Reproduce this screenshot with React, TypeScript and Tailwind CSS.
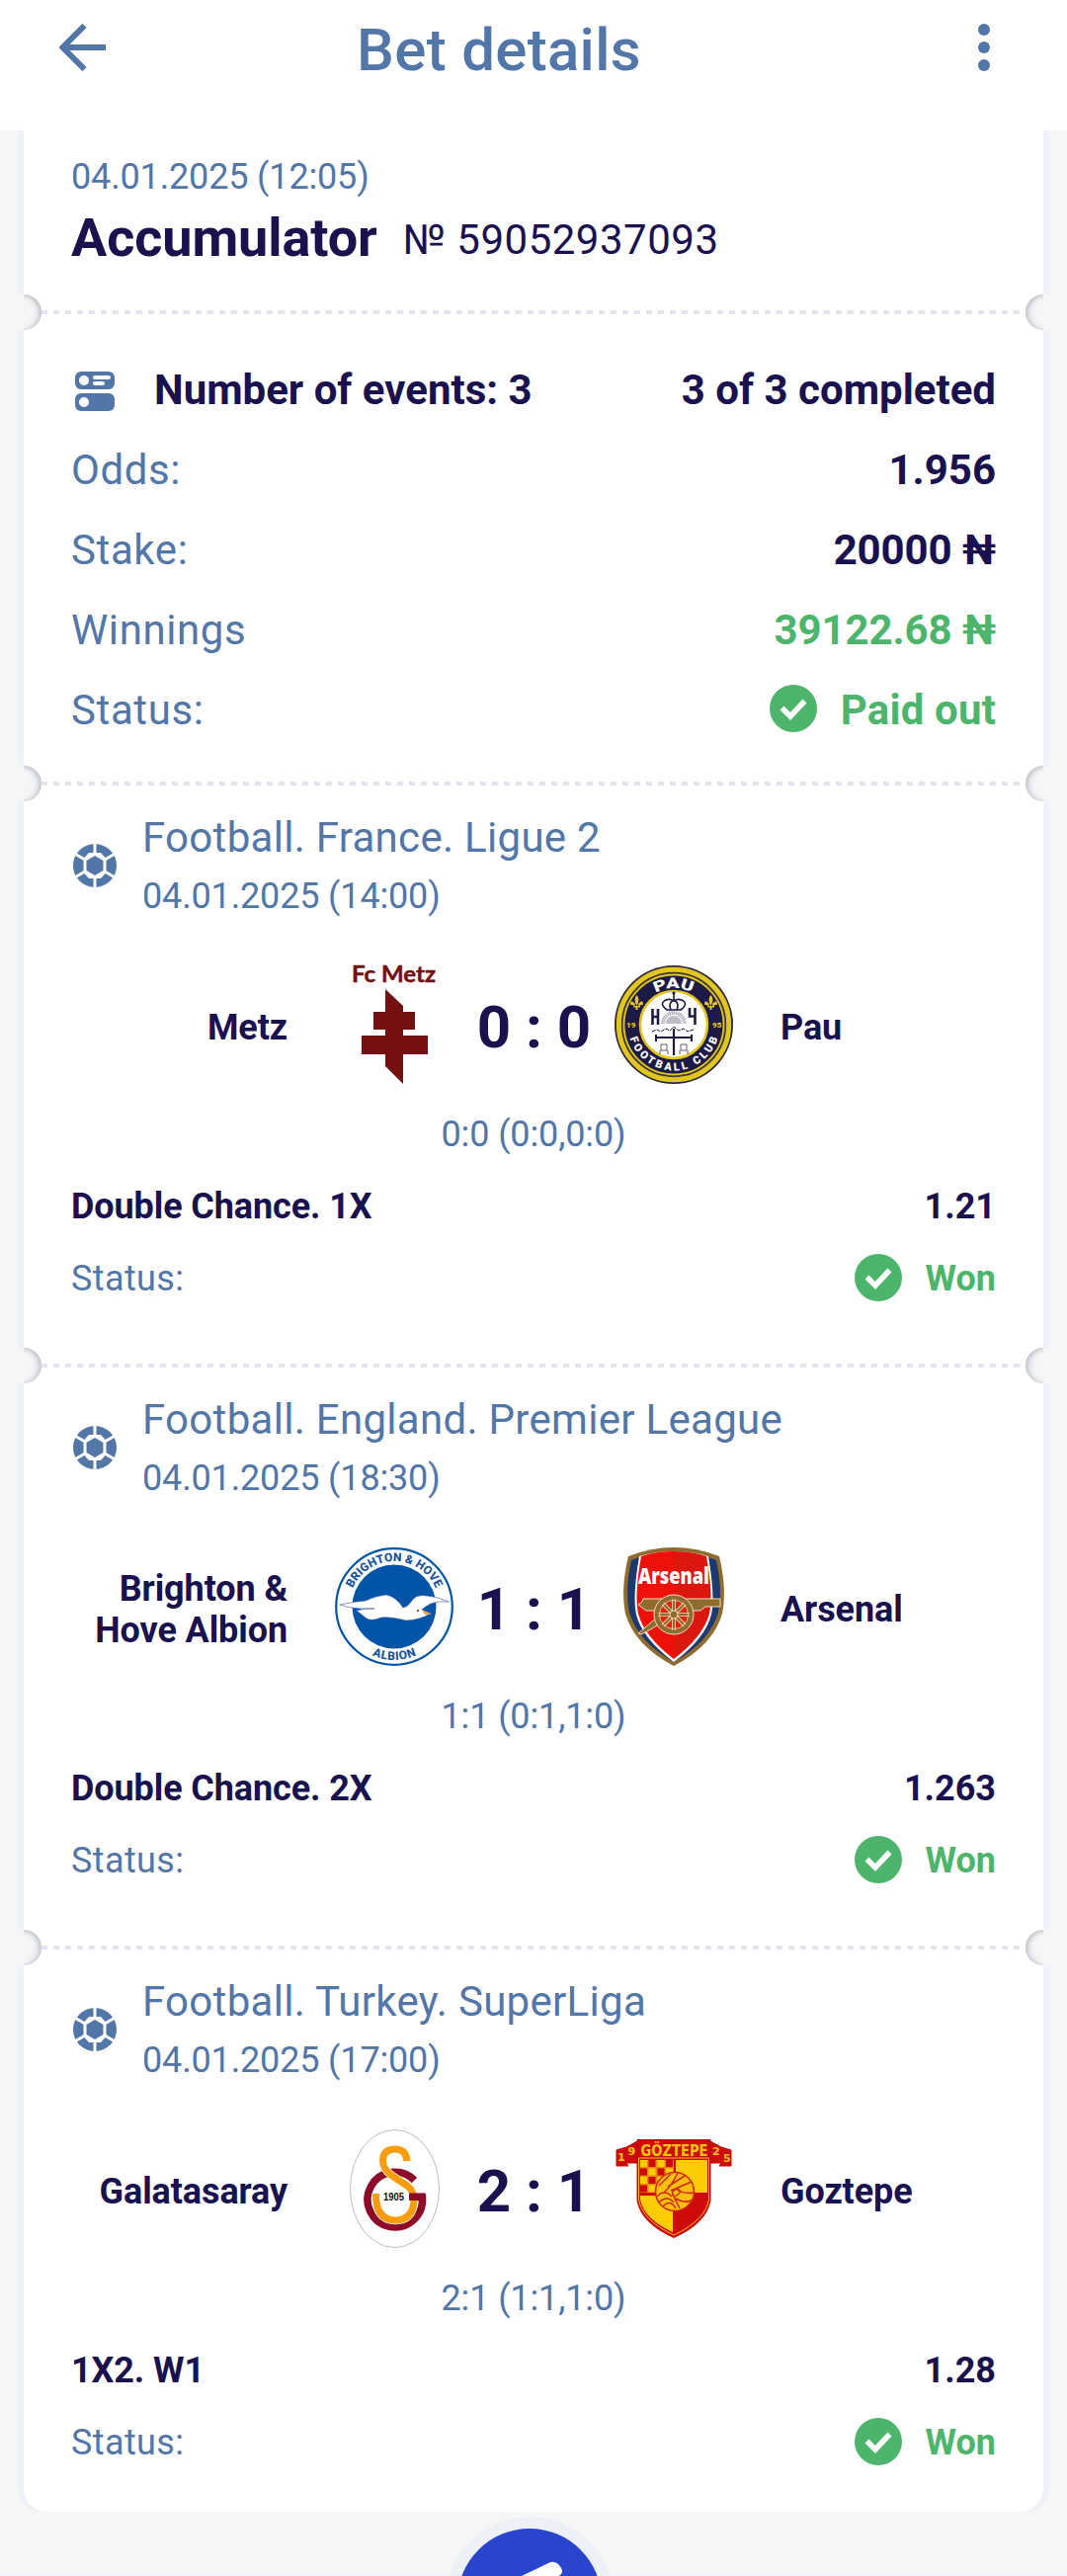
import { ReactNode } from "react"

const METZ = "#741011"
const NAVY = "#1d1b45"
const GOLD = "#e2c51f"
const ALBION = "#0055a9"
const BRONZE = "#8f6c2d"

function MetzCrest() {
  return (
    <svg width="120" height="120" viewBox="0 0 120 120" className="overflow-visible">
      <text x="17" y="17" fontSize="23.5" fontWeight="700" fontFamily="Lato, sans-serif" textLength="85" lengthAdjust="spacingAndGlyphs" fill={METZ} stroke={METZ} strokeWidth="0.5">
        Fc Metz
      </text>
      <path d="M51 24 69 41V47H81V65H69V71H94V90H69V120L51 102V90H27V71H51V65H39V47H51Z" fill={METZ} />
    </svg>
  )
}

function PauCrest() {
  return (
    <svg width="120" height="120" viewBox="0 0 120 120">
      <circle cx="60" cy="60" r="60" fill="#2c2b3c" />
      <circle cx="60" cy="60" r="55.7" fill="none" stroke={GOLD} strokeWidth="5" />
      <circle cx="60" cy="60" r="52" fill={NAVY} stroke="#55501f" strokeWidth="1" />
      <circle cx="60" cy="60" r="50.5" fill="none" stroke={GOLD} strokeWidth="1.8" />
      <circle cx="60" cy="60" r="34" fill="#fff" stroke={GOLD} strokeWidth="2.6" />
      <path id="pau-top" d="M23 60a37 37 0 0 1 74 0" fill="none" />
      <path id="pau-bottom" d="M13.500 60a46.500 46.500 0 0 0 93 0" fill="none" />
      <text fontSize="15" fontWeight="900" fontFamily="Roboto, sans-serif" fill="#fff" textAnchor="middle">
        <textPath href="#pau-top" startOffset="50%" textLength="38" lengthAdjust="spacingAndGlyphs">
          PAU
        </textPath>
      </text>
      <text fontSize="11" fontWeight="900" fontFamily="Roboto, sans-serif" fill="#fff" textAnchor="middle">
        <textPath href="#pau-bottom" startOffset="50%" textLength="118">
          FOOTBALL CLUB
        </textPath>
      </text>
      <text x="12" y="63" fontSize="8" fontWeight="900" fontFamily="Roboto, sans-serif" fill={GOLD}>
        19
      </text>
      <text x="99" y="63" fontSize="8" fontWeight="900" fontFamily="Roboto, sans-serif" fill={GOLD}>
        95
      </text>
      <g fill={GOLD}>
        <path d="M22.500 30q4 4 0 11q-4-7 0-11zM21 39q-5-6-5 1q2-1 4 2zM24 39q5-6 5 1q-2-1-4 2zM19 41h7v1.600h-7zM21.500 42h2v3h-2z" />
        <path d="M97.500 30q4 4 0 11q-4-7 0-11zM96 39q-5-6-5 1q2-1 4 2zM99 39q5-6 5 1q-2-1-4 2zM94 41h7v1.600h-7zM96.500 42h2v3h-2z" />
      </g>
      <g fill="none" stroke={NAVY} strokeWidth="1.600">
        <path d="M53 45Q45 39 51 35.500Q56 33 60 36Q64 33 69 35.500Q75 39 67 45ZM57 45Q54 38 60 35Q66 38 63 45M60 28v7" />
        <path d="M38.500 44v16M44 44v16M38.500 52h5.500" strokeWidth="2.600" />
        <path d="M76 43v8.500h6M81.500 43v17" strokeWidth="2.600" />
        <path d="M60 64v27" strokeWidth="2.200" />
        <path d="M41 73h38M42 70v7M78 70v7" strokeWidth="2" />
        <path d="M38 67l5-2 4 2 5-3 4 2 4-4 5 4 5-2 4 3 6-2" strokeWidth="1" strokeDasharray="4 1" />
        <path d="M47 80h6v6h-6zM67 80h6v6h-6zM46 86v4M54 86v4M66 86v4M74 86v4" strokeWidth="0.700" />
      </g>
      <path d="M49 59A11 11 0 0 1 71 59" fill="none" stroke="#a9a9b5" strokeWidth="4" strokeDasharray="1.300 0.800" />
      <path d="M52 59a8 8 0 0 1 16 0z" fill="#bdbdc6" />
      <circle cx="60" cy="28" r="1.600" fill={NAVY} />
    </svg>
  )
}

function BrightonCrest() {
  return (
    <svg width="120" height="120" viewBox="0 0 120 120">
      <circle cx="60" cy="60" r="58.800" fill="#fff" stroke={ALBION} strokeWidth="2.200" />
      <circle cx="60" cy="60" r="42.500" fill={ALBION} />
      <path id="albion-top" d="M14 60a46 46 0 0 1 92 0" fill="none" />
      <path id="albion-bottom" d="M6 60a54 54 0 0 0 108 0" fill="none" />
      <text fontSize="12" fontWeight="800" fontFamily="Roboto, sans-serif" fill="#17539b" textAnchor="middle">
        <textPath href="#albion-top" startOffset="50%" textLength="106">
          BRIGHTON &amp; HOVE
        </textPath>
      </text>
      <text fontSize="12" fontWeight="800" fontFamily="Roboto, sans-serif" fill="#17539b" textAnchor="middle">
        <textPath href="#albion-bottom" startOffset="50%" textLength="46">
          ALBION
        </textPath>
      </text>
      <path
        d="M5 58Q18 55 31 54Q41 49 52 48Q62 50 69 61Q74 60 77 55Q82 47 93 49Q105 50 115 55Q104 54 97 57Q91 60 88 63L97 67Q84 74 72 74Q55 70 47 71Q37 75 32 72L22 64Q30 61 40 62Q18 63 5 58Z"
        fill="#fff"
        stroke="#3f4f9c"
        strokeWidth="0.600"
      />
      <path d="M88 63 98 67.500 91 68Z" fill="#e9a13b" />
      <circle cx="84" cy="64" r="0.900" fill="#222" />
    </svg>
  )
}

function ArsenalCrest() {
  return (
    <svg width="120" height="120" viewBox="0 0 120 120">
      <path d="M14 9Q37 0 60 0T106 9Q114 42 109 67Q100 99 60 120Q20 99 11 67Q6 42 14 9Z" fill={BRONZE} />
      <path d="M17 13Q38 4 60 4T103 13Q110 43 105 66Q96 96 60 116Q24 96 15 66Q10 43 17 13Z" fill="#1d3a70" />
      <path d="M25 9Q42 4 60 4T95 9Q102 50 98 68Q92 92 60 116Q28 92 22 68Q18 50 25 9Z" fill="#fff" />
      <path d="M27 9Q42 4 60 4V113Q30 90 24 67Q20 48 27 9Z" fill="#ee1109" />
      <path d="M60 4Q78 4 93 9Q100 48 96 67Q90 90 60 113Z" fill="#dc170d" />
      <g stroke="#f5d9c6" strokeWidth="1" fill={BRONZE}>
        <path d="M29 52H107V60H92L87 64H32L28 61L24 58L28 55Z" />
        <path d="M44 70L24 87L27 88Q40 82 50 74Z" />
        <circle cx="60" cy="68" r="20" />
      </g>
      <circle cx="60" cy="68" r="14.500" fill="#db250f" />
      <path d="M60 52V84M44 68H76M49 57L71 79M71 57L49 79" stroke="#f2d8b5" strokeWidth="4" />
      <path d="M60 52V84M44 68H76M49 57L71 79M71 57L49 79" stroke={BRONZE} strokeWidth="2.400" />
      <circle cx="60" cy="68" r="4" fill={BRONZE} stroke="#f2d8b5" strokeWidth="1" />
      <circle cx="60" cy="68" r="14.500" fill="none" stroke="#f2d8b5" strokeWidth="0.800" />
      <text x="60" y="36.500" textAnchor="middle" fontSize="23" fontWeight="800" fontFamily="'Open Sans', sans-serif" textLength="72" lengthAdjust="spacingAndGlyphs" fill="#fff">
        Arsenal
      </text>
    </svg>
  )
}

function GalatasarayCrest() {
  return (
    <svg width="120" height="120" viewBox="0 0 120 120">
      <ellipse cx="60.500" cy="60" rx="45" ry="59.500" fill="#fff" stroke="#bdbdbd" strokeWidth="1" />
      <path d="M80.500 51.500A27.800 27.800 0 1 0 88.500 69H76" fill="none" stroke="#8d0a28" strokeWidth="7.500" />
      <path d="M73 32Q72 20 61 20Q49 20 48.500 31Q48 40 58 47L73 57Q80 62 80 72Q79 92 60.500 92Q41 91 41.500 65" fill="none" stroke="#fff" strokeWidth="8.500" />
      <path d="M73 32Q72 20 61 20Q49 20 48.500 31Q48 40 58 47L73 57Q80 62 80 72Q79 92 60.500 92Q41 91 41.500 65" fill="none" stroke="#fb9c0d" strokeWidth="7" />
      <path d="M75 68.200H91.500" stroke="#8d0a28" strokeWidth="7.500" />
      <text x="59.500" y="72" textAnchor="middle" fontSize="10" fontWeight="700" fontFamily="'Liberation Sans', sans-serif" textLength="21" lengthAdjust="spacingAndGlyphs" fill="#111">
        1905
      </text>
    </svg>
  )
}

function GoztepeCrest() {
  return (
    <svg width="120" height="120" viewBox="0 0 120 120">
      <g fill="#cf0a0a" stroke="#b90d05" strokeWidth="1">
        <path d="M2 21L12 18L23 12V34H12L14 37H2Z" />
        <path d="M118 21L108 18L97 12V34H108L106 37H118Z" />
        <path d="M23 10.500H97V72Q93 95 60 109.500Q27 95 23 72Z" />
      </g>
      <path d="M24.500 29H95.500V71Q92 92 60 107Q28 92 24.500 71Z" fill="none" stroke="#fdb614" strokeWidth="1" />
      <path d="M62 31H94V64H62ZM26 67H59V104Q30 91 26 71Z" fill="#fecb05" />
      <path d="M26 31H60V64H26Z" fill="#e8880a" />
      <path d="M26 31h7v7h-7zM43.500 31h7v7h-7zM34.500 39.500h7v7h-7zM52 39.500h7v7h-7zM26 48h7v7h-7zM43.500 48h7v7h-7zM34.500 56.500h7v7h-7z" fill="#fecb05" />
      <path d="M34.500 31h7v7h-7zM52 31h7v7h-7zM26 39.500h7v7h-7zM43.500 39.500h7v7h-7zM34.500 48h7v7h-7zM26 56.500h7v7h-7z" fill="#cf0a0a" />
      <circle cx="61" cy="63" r="19.500" fill="#fdbf0c" stroke="#cf2a0a" strokeWidth="1.600" />
      <path
        d="M45 57Q52 50 57 45M49 65Q58 57 64 44M54 58L71 47M57 62L78 53M43 68Q50 60 58 68M45 74Q53 66 60 74M49 78Q56 70 62 80M62 60Q70 66 80 64M62 70Q70 75 78 72M66 80L60 68Q56 62 64 60Q70 64 60 68"
        fill="none"
        stroke="#cf2a0a"
        strokeWidth="1.500"
      />
      <text x="60.500" y="26.500" textAnchor="middle" fontSize="15" fontWeight="700" fontFamily="'DejaVu Sans', sans-serif" textLength="68" lengthAdjust="spacingAndGlyphs" fill="#fec40d">
        GÖZTEPE
      </text>
      <g fontSize="11" fontWeight="700" fontFamily="'DejaVu Sans', sans-serif" fill="#fec40d">
        <text x="3" y="32">1</text>
        <text x="13.500" y="26">9</text>
        <text x="99" y="26">2</text>
        <text x="110" y="33">5</text>
      </g>
    </svg>
  )
}

function BallIcon() {
  return (
    <svg width="44" height="44" viewBox="0 0 44 44" className="mt-[-4px] mr-[26px] ml-[2px] shrink-0">
      <circle cx="22" cy="22" r="22" fill="#5276a7" />
      <path d="M22 -1V10M22 34V45M12 16L0 9M32 16L44 9M12 28L0 35M32 28L44 35" stroke="#fff" strokeWidth="3" />
      <path d="M22 9H28L33.500 15V29L28 35H16L10.500 29V15L16 9Z" fill="#fff" />
      <path d="M22 12L30.500 17V27L22 32L13.500 27V17Z" fill="#5276a7" />
    </svg>
  )
}

function CheckBadge() {
  return (
    <svg width="48" height="48" viewBox="0 0 48 48" className="mt-[-3px] mr-[24px]">
      <circle cx="24" cy="24" r="24" fill="#4cb56b" />
      <path d="M12.500 23.500L21 32L35.500 16.500" fill="none" stroke="#fff" strokeWidth="5.500" />
    </svg>
  )
}

// perforated edge between two parts of the ticket
function Divider() {
  return (
    <div className="relative h-9 overflow-hidden bg-white">
      <svg width="1044" height="36" viewBox="0 0 1044 36" className="block">
        <path d="M24 18H1020" stroke="#e3e4f0" strokeWidth="4" strokeDasharray="6 6" />
      </svg>
      <div className="absolute top-0 left-[-12px] size-9 rounded-full bg-[#f6f6f6] shadow-[inset_-2px_1px_4px_#bfc1c6,inset_-6px_0_6px_#e6e8ed]" />
      <div className="absolute top-0 right-[-12px] size-9 rounded-full bg-[#f6f6f6] shadow-[inset_2px_1px_4px_#bfc1c6,inset_6px_0_6px_#e6e8ed]" />
      <div className="absolute top-0 left-0 h-9 w-[6px] bg-[#f6f6f6]" />
      <div className="absolute top-0 right-0 h-9 w-[6px] bg-[#f6f6f6]" />
    </div>
  )
}

function Section({ className = "", children }: { className?: string; children: ReactNode }) {
  return (
    <section className={`mx-[6px] bg-white px-[48px] shadow-[-6px_0_0_#eef2f8,6px_0_0_#eef2f8] ${className}`}>
      {children}
    </section>
  )
}

function SummaryRow({ label, children }: { label: string; children: ReactNode }) {
  return (
    <div className="flex h-[81px] items-center justify-between text-[42px]">
      <span className="tracking-[0.6px] text-[#5276a7]">{label}</span>
      {children}
    </div>
  )
}

const events = [
  {
    league: "Football. France. Ligue 2",
    date: "04.01.2025 (14:00)",
    home: "Metz",
    away: "Pau",
    homeCrest: <MetzCrest />,
    awayCrest: <PauCrest />,
    score: ["0", "0"],
    halves: "0:0 (0:0,0:0)",
    market: "Double Chance. 1X",
    odds: "1.21",
  },
  {
    league: "Football. England. Premier League",
    date: "04.01.2025 (18:30)",
    home: "Brighton & Hove Albion",
    away: "Arsenal",
    homeCrest: <BrightonCrest />,
    awayCrest: <ArsenalCrest />,
    score: ["1", "1"],
    halves: "1:1 (0:1,1:0)",
    market: "Double Chance. 2X",
    odds: "1.263",
  },
  {
    league: "Football. Turkey. SuperLiga",
    date: "04.01.2025 (17:00)",
    home: "Galatasaray",
    away: "Goztepe",
    homeCrest: <GalatasarayCrest />,
    awayCrest: <GoztepeCrest />,
    score: ["2", "1"],
    halves: "2:1 (1:1,1:0)",
    market: "1X2. W1",
    odds: "1.28",
  },
]

export default function App() {
  return (
    <div className="relative h-[2607px] w-[1080px] overflow-hidden bg-[#f6f6f6] font-[Roboto,sans-serif] text-[#19124f]">
      <header className="flex h-[132px] items-start justify-between bg-white px-[60px] pt-6 text-[#5276a7]">
        <svg width="48" height="48" viewBox="0 0 48 48" fill="none" stroke="currentColor" strokeWidth="6">
          <path d="M25.500 2L3.500 24L25.500 46M3.500 24H47" />
        </svg>
        <h1 className="mt-[-3px] ml-[-70px] text-[60px] leading-[60px] font-medium tracking-[0.3px]">Bet details</h1>
        <svg width="48" height="48" viewBox="0 0 48 48" fill="currentColor">
          <circle cx="24" cy="6" r="6" />
          <circle cx="24" cy="24" r="6" />
          <circle cx="24" cy="42" r="6" />
        </svg>
      </header>

      <main className="mx-[18px]">
        <Section className="h-[166px] pt-[22px]">
          <p className="h-[50px] text-[36px] leading-[50px] tracking-[-0.15px] text-[#5276a7]">04.01.2025 (12:05)</p>
          <div className="flex h-[74px] items-baseline leading-[74px]">
            <h2 className="text-[54px] font-bold tracking-[-0.1px]">Accumulator</h2>
            <span className="relative top-[-2px] ml-[26px] text-[42px] tracking-[0.5px]">№ 59052937093</span>
          </div>
        </Section>
        <Divider />
        <Section className="h-[441px] pt-5">
          <div className="flex h-[81px] items-center text-[42px] font-bold">
            <svg width="40" height="40" viewBox="0 0 40 40" className="mt-[2px] mr-[40px] ml-[4px]">
              <rect width="40" height="18" rx="6" fill="#5276a7" />
              <rect y="22" width="40" height="18" rx="6" fill="#5276a7" />
              <circle cx="9" cy="9" r="5" fill="#fff" />
              <circle cx="9" cy="31" r="5" fill="#fff" />
              <rect x="18" y="4" width="18" height="4" rx="2" fill="#fff" />
              <rect x="18" y="10" width="12" height="4" rx="2" fill="#fff" />
            </svg>
            <span className="flex-1">Number of events: 3</span>
            <span>3 of 3 completed</span>
          </div>
          <SummaryRow label="Odds:">
            <span className="font-bold">1.956</span>
          </SummaryRow>
          <SummaryRow label="Stake:">
            <span className="font-bold tracking-[-0.1px]">20000 ₦</span>
          </SummaryRow>
          <SummaryRow label="Winnings">
            <span className="font-bold tracking-[-0.1px] text-[#4cb56b]">39122.68 ₦</span>
          </SummaryRow>
          <SummaryRow label="Status:">
            <span className="flex items-center font-bold tracking-[0.15px] text-[#4cb56b]">
              <CheckBadge />
              Paid out
            </span>
          </SummaryRow>
        </Section>

        {events.map((event, i) => (
          <div key={event.league}>
            <Divider />
            <Section className={i === events.length - 1 ? "h-[553px] rounded-b-[24px] pt-[9px]" : "h-[553px] pt-[9px]"}>
              <div className="flex h-[116px] items-center text-[#5276a7]">
                <BallIcon />
                <div>
                  <h3 className="text-[42px] leading-[56px] tracking-[0.3px]">{event.league}</h3>
                  <p className="mt-px text-[36px] leading-[60px] tracking-[-0.15px]">{event.date}</p>
                </div>
              </div>
              <div className="mt-[41px] flex h-[120px] items-center text-[36px] leading-[42px] font-bold tracking-[-0.1px]">
                <span className="mt-[5px] w-[219px] pl-5 text-right">{event.home}</span>
                <span className="ml-[48px] size-[120px] tracking-normal">{event.homeCrest}</span>
                <div className="mt-[6px] flex w-[163px] items-center justify-center text-[60px]">
                  <span className="w-[50px] text-center">{event.score[0]}</span>
                  <span className="w-[31px] text-center">:</span>
                  <span className="w-[50px] text-center">{event.score[1]}</span>
                </div>
                <span className="size-[120px] tracking-normal">{event.awayCrest}</span>
                <span className="mt-[5px] ml-[48px]">{event.away}</span>
              </div>
              <div className="mt-[15px] text-[36px] leading-[73px]">
                <p className="text-center tracking-[-0.1px] text-[#5276a7]">{event.halves}</p>
                <div className="flex justify-between font-bold">
                  <span className="tracking-[-0.1px]">{event.market}</span>
                  <span>{event.odds}</span>
                </div>
                <div className="flex justify-between">
                  <span className="tracking-[0.4px] text-[#5276a7]">Status:</span>
                  <span className="flex items-center font-bold text-[#4cb56b]">
                    <CheckBadge />
                    Won
                  </span>
                </div>
              </div>
            </Section>
          </div>
        ))}
      </main>

      <div className="absolute top-[2605px] left-0 h-[2px] w-full bg-[#f0f2f8]" />
      <button className="absolute top-[2547px] left-[451px] size-[170px] rounded-full bg-[#eef0f8] p-3">
        <svg width="146" height="146" viewBox="0 0 146 146">
          <circle cx="73" cy="73" r="73" fill="#2945cd" />
          <path d="M40 60L92 35Q100 31 105 40Q107 43 105 46L80 70Z" fill="#fff" />
        </svg>
      </button>
    </div>
  )
}
